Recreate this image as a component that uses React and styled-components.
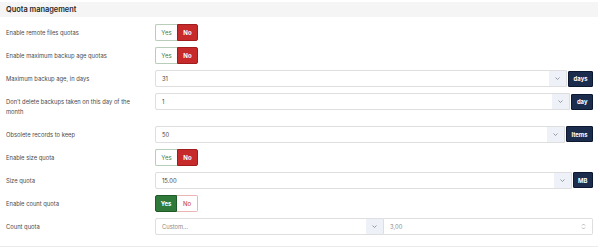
import React from "react";
import styled, { createGlobalStyle } from "styled-components";

const GlobalStyle = createGlobalStyle`
  body {
    margin: 0;
    background: #fff;
    font-family: Inter, "Liberation Sans", sans-serif;
  }
`;

const Card = styled.div`
  width: 598px;
  margin-top: 2px;
  border-bottom: 1px solid #ebebeb;
`;

const Header = styled.h3`
  margin: 0;
  height: 15px;
  display: flex;
  align-items: center;
  padding-left: 6px;
  background: #f5f5f5;
  color: #2a2a2a;
  font-size: 7.4px;
  font-weight: 600;
`;

const Body = styled.div`
  display: flex;
  flex-direction: column;
  gap: 6px;
  padding: 7px 5px 11px 6px;
`;

const Row = styled.div`
  display: flex;
  align-items: flex-start;
`;

const Label = styled.label`
  width: 135px;
  margin-right: 14px;
  padding: 4px 0 3.5px;
  line-height: 9.5px;
  font-size: 5.8px;
  color: #4a4a4a;
`;

const Control = styled.div`
  flex: 1;
  display: flex;
  align-items: center;
  min-height: 17px;
`;

const Toggle = styled.div`
  display: flex;
  height: 17px;
`;

const ToggleBtn = styled.span`
  box-sizing: border-box;
  width: ${({ $w }) => $w}px;
  display: flex;
  align-items: center;
  justify-content: center;
  font-size: 6px;
  border: 1px solid;
  ${({ $kind, $active }) =>
    $kind === "yes"
      ? $active
        ? "background:#2f7a3a;border-color:#1f5a28;color:#fff;font-weight:700;"
        : "background:#fff;border-color:#b9cdbb;color:#3f7d4a;border-right:none;"
      : $active
      ? "background:#c62a2a;border-color:#a11d1d;color:#fff;font-weight:700;"
      : "background:#fff;border-color:#eab5b5;color:#c62a2a;border-left:none;"}
  border-radius: ${({ $kind }) => ($kind === "yes" ? "2px 0 0 2px" : "0 2px 2px 0")};
`;

const Select = styled.div`
  box-sizing: border-box;
  flex: 1;
  height: 17px;
  display: flex;
  align-items: center;
  border: 1px solid #dedede;
  border-radius: 2px 0 0 2px;
  font-size: 5.8px;
  color: ${({ $placeholder }) => ($placeholder ? "#8a8a8a" : "#444")};
  overflow: hidden;
`;

const Value = styled.span`
  flex: 1;
  padding-left: 6px;
`;

const Chevron = styled.span`
  width: 17px;
  align-self: stretch;
  background: #eef2f8;
  display: flex;
  align-items: center;
  justify-content: center;
`;

const Unit = styled.span`
  box-sizing: border-box;
  height: 16px;
  padding: 0 4.5px;
  margin-left: 1px;
  display: flex;
  align-items: center;
  background: #1b2c4d;
  border: 1px solid #0c1830;
  border-radius: 1px;
  color: #fff;
  font-size: 5.9px;
  font-weight: 700;
`;

const NumberInput = styled.div`
  box-sizing: border-box;
  width: 209px;
  height: 17px;
  display: flex;
  align-items: center;
  justify-content: space-between;
  padding: 0 6px;
  border: 1px solid #dedede;
  border-left: none;
  border-radius: 0 2px 2px 0;
  font-size: 5.8px;
  color: #8a8a8a;
`;

const ChevronIcon = () => (
  <svg width="5" height="3" viewBox="0 0 5 3">
    <polyline points="0.5,0.5 2.5,2.5 4.5,0.5" fill="none" stroke="#7d838e" strokeWidth="0.8" />
  </svg>
);

const SpinIcon = () => (
  <svg width="5" height="7" viewBox="0 0 5 7">
    <polyline points="1,2.5 2.5,1 4,2.5" fill="none" stroke="#9a9a9a" strokeWidth="0.7" />
    <polyline points="1,4.5 2.5,6 4,4.5" fill="none" stroke="#9a9a9a" strokeWidth="0.7" />
  </svg>
);

function YesNo({ value }) {
  return (
    <Toggle>
      <ToggleBtn $kind="yes" $w={22} $active={value}>
        Yes
      </ToggleBtn>
      <ToggleBtn $kind="no" $w={21} $active={!value}>
        No
      </ToggleBtn>
    </Toggle>
  );
}

function UnitSelect({ value, unit }) {
  return (
    <>
      <Select>
        <Value>{value}</Value>
        <Chevron>
          <ChevronIcon />
        </Chevron>
      </Select>
      <Unit>{unit}</Unit>
    </>
  );
}

const rows = [
  { label: "Enable remote files quotas", toggle: false },
  { label: "Enable maximum backup age quotas", toggle: false },
  { label: "Maximum backup age, in days", value: "31", unit: "days" },
  { label: "Don\u2019t delete backups taken on this day of the month", value: "1", unit: "day" },
  { label: "Obsolete records to keep", value: "50", unit: "Items" },
  { label: "Enable size quota", toggle: false },
  { label: "Size quota", value: "15.00", unit: "MB" },
  { label: "Enable count quota", toggle: true },
];

export default function App() {
  return (
    <>
      <GlobalStyle />
      <Card>
        <Header>Quota management</Header>
        <Body>
          {rows.map((r) => (
            <Row key={r.label}>
              <Label>{r.label}</Label>
              <Control>
                {"toggle" in r ? (
                  <YesNo value={r.toggle} />
                ) : (
                  <UnitSelect value={r.value} unit={r.unit} />
                )}
              </Control>
            </Row>
          ))}
          <Row>
            <Label>Count quota</Label>
            <Control>
              <Select $placeholder>
                <Value>Custom...</Value>
                <Chevron>
                  <ChevronIcon />
                </Chevron>
              </Select>
              <NumberInput>
                <span>3,00</span>
                <SpinIcon />
              </NumberInput>
            </Control>
          </Row>
        </Body>
      </Card>
    </>
  );
}
